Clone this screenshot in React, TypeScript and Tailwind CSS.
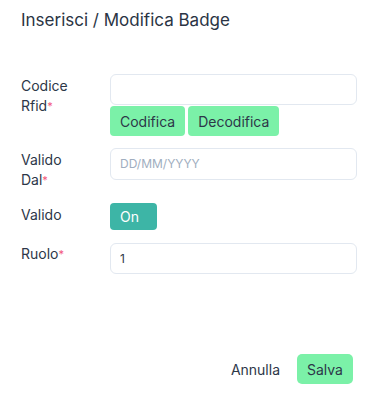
import React from "react";

const Req = () => <span className="text-[#f2557a] text-[11px] align-top">*</span>;

export default function App() {
  return (
    <div
      className="w-[372px] h-[401px] bg-white flex flex-col text-[#2d3748]"
      style={{ fontFamily: "Inter, 'Noto Sans', sans-serif" }}
    >
      <div className="pl-[21px] pt-[8px] h-[74px] text-[17px] leading-[24px] text-[#2a3444]">
        Inserisci / Modifica Badge
      </div>
      <div className="flex flex-col gap-[12px] pl-[21px] pr-[15px]">
        <div className="flex">
          <div className="w-[89px] text-[14px] leading-[20px] pt-[2px]">
            Codice
            <br />
            Rfid<Req />
          </div>
          <div className="flex-1 flex flex-col">
            <div className="h-[31px] rounded-[6px] border border-[#e2e8f0] bg-white" />
            <div className="flex gap-[3px] mt-[1px]">
              <button className="h-[30px] px-[10px] rounded-[4px] bg-[#7bf1a8] text-[14px] text-[#2d3748]">
                Codifica
              </button>
              <button className="h-[30px] px-[10px] rounded-[4px] bg-[#7bf1a8] text-[14px] text-[#2d3748]">
                Decodifica
              </button>
            </div>
          </div>
        </div>
        <div className="flex">
          <div className="w-[89px] text-[14px] leading-[20px] pt-[2px] h-[43px]">
            Valido
            <br />
            Dal<Req />
          </div>
          <div className="flex-1">
            <div className="h-[32px] rounded-[6px] border border-[#e2e8f0] bg-white flex items-center px-[9px] text-[12px] text-[#a0aec0]">
              DD/MM/YYYY
            </div>
          </div>
        </div>
        <div className="flex">
          <div className="w-[89px] text-[14px] leading-[20px] pt-[2px]">Valido</div>
          <div className="flex-1">
            <button className="w-[47px] h-[27px] rounded-[4px] bg-[#3db5a6] text-white text-[14px] text-left pl-[10px]">
              On
            </button>
          </div>
        </div>
        <div className="flex mt-[1px]">
          <div className="w-[89px] text-[14px] leading-[20px] pt-[1px]">
            Ruolo<Req />
          </div>
          <div className="flex-1">
            <div className="h-[31px] rounded-[6px] border border-[#e2e8f0] bg-white flex items-center px-[9px] text-[12px] text-[#2d3748]">
              1
            </div>
          </div>
        </div>
      </div>
      <div className="mt-[80px] flex justify-end items-center gap-[5px] pr-[19px]">
        <button className="px-[12px] h-[30px] text-[14px] text-[#2d3748]">Annulla</button>
        <button className="w-[56px] h-[30px] rounded-[5px] bg-[#7bf1a8] text-[14px] text-[#2d3748]">
          Salva
        </button>
      </div>
    </div>
  );
}
